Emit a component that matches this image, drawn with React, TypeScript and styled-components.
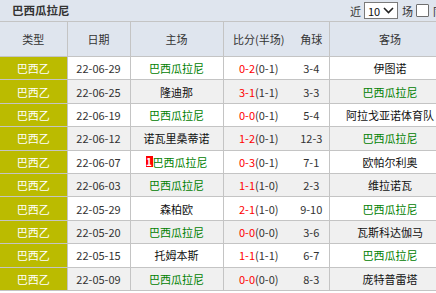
import React from "react";
import styled, { createGlobalStyle } from "styled-components";

const Global = createGlobalStyle`
  html, body { margin: 0; padding: 0; background: #fff; overflow: hidden; }
  body { font-family: "Noto Sans CJK SC", "Noto Sans", sans-serif; color: #333; }
`;

const Page = styled.div`
  width: 472px;
`;

const TitleBar = styled.div`
  display: flex;
  align-items: center;
  height: 21px;
  background: #dfe5ee;
  border-bottom: 1px solid #c4c4c4;
  padding: 0 0 0 12px;
  box-sizing: content-box;
`;

const Title = styled.span`
  font-size: 11.5px;
  font-weight: bold;
  color: #333;
  line-height: 21px;
`;

const Controls = styled.div`
  margin-left: auto;
  display: flex;
  align-items: center;
  gap: 3px;
  font-size: 11px;
  color: #333;
  padding-right: 6px;
`;

const SelectBox = styled.div`
  display: flex;
  align-items: center;
  justify-content: space-between;
  width: 34px;
  height: 17px;
  box-sizing: border-box;
  border: 1px solid #7a7a7a;
  background: #fff;
  padding: 0 3px 0 3px;
  font-size: 11px;
  color: #111;
  margin-right: 1px;
`;

const Checkbox = styled.span`
  display: inline-block;
  width: 13px;
  height: 13px;
  box-sizing: border-box;
  border: 1px solid #6f6f6f;
  background: #fff;
  border-radius: 1px;
  margin-right: 1px;
`;

const Table = styled.table`
  width: 451px;
  border-collapse: collapse;
  table-layout: fixed;
  font-size: 11px;
`;

const HeadCell = styled.th<{ $noRight?: boolean; $noLeft?: boolean }>`
  height: 34px;
  background: #dfe5ee;
  color: #333;
  font-weight: normal;
  text-align: center;
  padding: 0;
  border: 1px solid #c4c4c4;
  border-top: none;
  ${(p) => (p.$noRight ? "border-right-style: hidden;" : "")}
  ${(p) => (p.$noLeft ? "border-left-style: hidden;" : "")}
  &:first-child { border-left-style: hidden; }
`;

const Row = styled.tr<{ $alt: boolean }>`
  height: 23.4px;
  background: ${(p) => (p.$alt ? "#f0f0f0" : "#ffffff")};
`;

const Cell = styled.td<{ $noRight?: boolean; $noLeft?: boolean }>`
  padding: 0;
  text-align: center;
  color: #333;
  border: 1px solid #c4c4c4;
  white-space: nowrap;
  ${(p) => (p.$noRight ? "border-right-style: hidden;" : "")}
  ${(p) => (p.$noLeft ? "border-left-style: hidden;" : "")}
`;

const TypeCell = styled(Cell)`
  background: #bbbb00;
  color: #fff;
  border-left-style: hidden;
`;

const Team = styled.span<{ $home: boolean }>`
  color: ${(p) => (p.$home ? "#008000" : "#111")};
`;

const Badge = styled.span`
  display: inline-block;
  background: #ff0000;
  color: #fff;
  font-weight: bold;
  font-size: 10px;
  line-height: 11px;
  width: 7px;
  text-align: center;
  vertical-align: 1px;
`;

const FullScore = styled.span`
  color: #ff0000;
`;

type Match = {
  date: string;
  home: string;
  full: string;
  half: string;
  corner: string;
  away: string;
  badge?: string;
};

const TEAM = "巴西瓜拉尼";

const matches: Match[] = [
  { date: "22-06-29", home: TEAM, full: "0-2", half: "(0-1)", corner: "3-4", away: "伊图诺" },
  { date: "22-06-25", home: "隆迪那", full: "3-1", half: "(1-1)", corner: "3-3", away: TEAM },
  { date: "22-06-19", home: TEAM, full: "0-0", half: "(0-1)", corner: "5-4", away: "阿拉戈亚诺体育队" },
  { date: "22-06-12", home: "诺瓦里桑蒂诺", full: "1-2", half: "(0-1)", corner: "12-3", away: TEAM },
  { date: "22-06-07", home: TEAM, full: "0-3", half: "(0-1)", corner: "7-1", away: "欧帕尔利奥", badge: "1" },
  { date: "22-06-03", home: TEAM, full: "1-1", half: "(1-0)", corner: "2-3", away: "维拉诺瓦" },
  { date: "22-05-29", home: "森柏欧", full: "2-1", half: "(1-0)", corner: "9-10", away: TEAM },
  { date: "22-05-20", home: TEAM, full: "0-0", half: "(0-0)", corner: "3-6", away: "瓦斯科达伽马" },
  { date: "22-05-15", home: "托姆本斯", full: "1-1", half: "(1-1)", corner: "6-7", away: TEAM },
  { date: "22-05-09", home: TEAM, full: "0-0", half: "(0-0)", corner: "8-3", away: "庞特普雷塔" },
];

const Chevron = () => (
  <svg width="11" height="7" viewBox="0 0 11 7">
    <path d="M1 1 L5.5 5.5 L10 1" fill="none" stroke="#222" strokeWidth="1.6" />
  </svg>
);

export default function App() {
  return (
    <Page>
      <Global />
      <TitleBar>
        <Title>巴西瓜拉尼</Title>
        <Controls>
          <span>近</span>
          <SelectBox>
            <span>10</span>
            <Chevron />
          </SelectBox>
          <span>场</span>
          <Checkbox />
          <span>同主客</span>
        </Controls>
      </TitleBar>
      <Table>
        <colgroup>
          <col style={{ width: 67 }} />
          <col style={{ width: 63 }} />
          <col style={{ width: 93 }} />
          <col style={{ width: 71 }} />
          <col style={{ width: 35 }} />
          <col style={{ width: 122 }} />
        </colgroup>
        <thead>
          <tr>
            <HeadCell>类型</HeadCell>
            <HeadCell>日期</HeadCell>
            <HeadCell>主场</HeadCell>
            <HeadCell $noRight>比分(半场)</HeadCell>
            <HeadCell $noLeft>角球</HeadCell>
            <HeadCell>客场</HeadCell>
          </tr>
        </thead>
        <tbody>
          {matches.map((m, i) => (
            <Row key={m.date} $alt={i % 2 === 1}>
              <TypeCell>巴西乙</TypeCell>
              <Cell>{m.date}</Cell>
              <Cell>
                {m.badge && <Badge>{m.badge}</Badge>}
                <Team $home={m.home === TEAM}>{m.home}</Team>
              </Cell>
              <Cell $noRight>
                <FullScore>{m.full}</FullScore>
                {m.half}
              </Cell>
              <Cell $noLeft>{m.corner}</Cell>
              <Cell>
                <Team $home={m.away === TEAM}>{m.away}</Team>
              </Cell>
            </Row>
          ))}
        </tbody>
      </Table>
    </Page>
  );
}
